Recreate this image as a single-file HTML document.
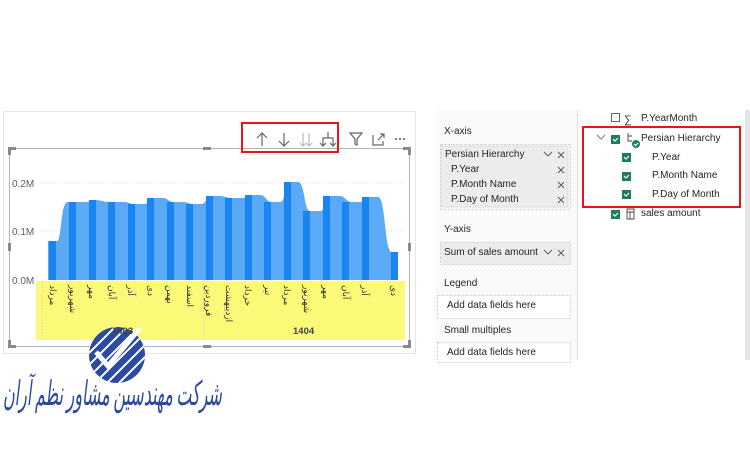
<!DOCTYPE html>
<html><head><meta charset="utf-8"><style>
body{margin:0;width:750px;height:450px;background:#fff;position:relative;overflow:hidden;font-family:"Liberation Sans","Noto Sans CJK SC",sans-serif}
.a{position:absolute;white-space:nowrap}
.t{font-size:10px;color:#252423}
</style></head><body>
<svg width="750" height="450" style="position:absolute;left:0;top:0">
<defs>
<clipPath id="cc"><circle cx="117" cy="355" r="28"/></clipPath>
</defs>
<rect x="3.5" y="111.5" width="412" height="242" fill="#fff" stroke="#e6e6e6"/>
<rect x="9.5" y="148.5" width="400" height="198" fill="none" stroke="#b3b3b3"/>
<g fill="#8a8a8a">
<rect x="8" y="147" width="8" height="3"/><rect x="8" y="147" width="3" height="8"/>
<rect x="403" y="147" width="8" height="3"/><rect x="408" y="147" width="3" height="8"/>
<rect x="8" y="345" width="8" height="3"/><rect x="8" y="340" width="3" height="8"/>
<rect x="403" y="345" width="8" height="3"/><rect x="408" y="340" width="3" height="8"/>
<rect x="203" y="147" width="8" height="3"/><rect x="203" y="345" width="8" height="3"/>
<rect x="8" y="243" width="3" height="8"/><rect x="408" y="243" width="3" height="8"/>
</g>
<rect x="242" y="123" width="96" height="29" fill="none" stroke="#e8141b" stroke-width="2"/>
<g stroke="#666" stroke-width="1.2" fill="none">
<path d="M262 146V133M257 138l5-5 5 5"/>
<path d="M284 133v13M279 141l5 5 5-5"/>
<path d="M303 133v13M309 133v13M300 143l3 3 3-3M306 143l3 3 3-3" stroke="#bbb"/>
<path d="M328 132v6M323 146v-8h10v8M320 143l3 3 3-3M330 143l3 3 3-3"/>
<path d="M350 133h12l-5 6v6l-2-1v-5z"/>
<path d="M373 135v10h10v-4M378 140l6-6M380 134h4v4"/>
</g>
<g fill="#555"><circle cx="396" cy="139" r="1"/><circle cx="400" cy="139" r="1"/><circle cx="404" cy="139" r="1"/></g>
<g stroke="#ddd" stroke-dasharray="1 2"><path d="M40 183H405M40 231H405"/></g>
<path d="M48 280V241H57C62 241 60 202 68 202H86C90 202 92 200 96 200C100 200 104 202 110 202H124C128 202 130 204 134 204H144C150 204 150 198 156 198H163C168 198 168 202 174 202H182C188 202 188 204 194 204H202C206 204 206 196 212 196H220C225 196 226 198 232 198H242C247 198 247 195 252 195H260C266 195 266 202 272 202H280C286 202 284 182 290 182H298C305 182 304 211 310 211H320C326 211 325 196 330 196H340C345 196 346 202 352 202H360C365 202 365 197 370 197H378C386 197 384 252 392 252H398V280Z" fill="#5aaaf8"/>
<g fill="#1a84f0">
<rect x="49" y="241" width="7" height="39"/><rect x="69" y="202" width="7" height="78"/><rect x="89" y="200" width="7" height="80"/><rect x="108" y="202" width="7" height="78"/><rect x="128" y="204" width="7" height="76"/><rect x="147" y="198" width="7" height="82"/><rect x="167" y="202" width="7" height="78"/><rect x="186" y="204" width="7" height="76"/><rect x="206" y="196" width="7" height="84"/><rect x="225" y="198" width="7" height="82"/><rect x="245" y="195" width="7" height="85"/><rect x="264" y="202" width="7" height="78"/><rect x="284" y="182" width="7" height="98"/><rect x="303" y="211" width="7" height="69"/><rect x="323" y="196" width="7" height="84"/><rect x="342" y="202" width="7" height="78"/><rect x="362" y="197" width="7" height="83"/><rect x="391" y="252" width="7" height="28"/>
</g>
<rect x="36" y="281" width="369" height="59" fill="#fafa78"/>
<path d="M203.5 281V340M42.5 281V340" stroke="#ccc" stroke-dasharray="1 2"/>
<g font-family="Liberation Sans" font-size="10" fill="#605e5c"><text x="12" y="187">0.2M</text><text x="12" y="235">0.1M</text><text x="12" y="284">0.0M</text></g>
<g font-family="Noto Sans CJK SC,sans-serif" font-size="9" fill="#333">
<text transform="translate(50,285) rotate(90)">مرداد</text>
<text transform="translate(70,285) rotate(90)">شهریور</text>
<text transform="translate(89,285) rotate(90)">مهر</text>
<text transform="translate(109,285) rotate(90)">آبان</text>
<text transform="translate(128,285) rotate(90)">آذر</text>
<text transform="translate(148,285) rotate(90)">دی</text>
<text transform="translate(167,285) rotate(90)">بهمن</text>
<text transform="translate(187,285) rotate(90)">اسفند</text>
<text transform="translate(206,285) rotate(90)">فروردین</text>
<text transform="translate(226,285) rotate(90)">اردیبهشت</text>
<text transform="translate(245,285) rotate(90)">خرداد</text>
<text transform="translate(265,285) rotate(90)">تیر</text>
<text transform="translate(284,285) rotate(90)">مرداد</text>
<text transform="translate(304,285) rotate(90)">شهریور</text>
<text transform="translate(323,285) rotate(90)">مهر</text>
<text transform="translate(343,285) rotate(90)">آبان</text>
<text transform="translate(362,285) rotate(90)">آذر</text>
<text transform="translate(391,285) rotate(90)">دی</text>
</g>
<circle cx="117" cy="355" r="28" fill="#2b4aa0"/>
<g clip-path="url(#cc)" stroke="#fff" stroke-width="2">
<path d="M70 360l60-60M76 366l60-60M82 372l60-60M88 378l60-60M94 384l60-60M100 390l60-60M106 396l60-60M112 402l60-60M118 408l60-60M124 414l60-60"/>
</g>
<path d="M96 352l12 14 32-38" stroke="#fff" stroke-width="5" fill="none"/>
<g font-family="Liberation Sans" font-size="9.5" font-weight="bold" fill="#444"><text x="112" y="334">1403</text><text x="293" y="334">1404</text></g>
<rect x="435" y="110" width="142" height="250" fill="#fafafa"/>
<rect x="577" y="110" width="168" height="250" fill="#fff"/>
<line x1="577.5" y1="110" x2="577.5" y2="360" stroke="#e1e1e1"/>
<rect x="745" y="110" width="5" height="250" fill="#e6e6e6"/>
<rect x="440.5" y="144.5" width="130" height="65" fill="none" stroke="#ccc" stroke-dasharray="2 2"/>
<rect x="441" y="146" width="127" height="61" fill="#ececec" stroke="#ddd"/>
<rect x="440.5" y="242.5" width="130" height="22" fill="#ececec" stroke="#ccc" stroke-dasharray="2 2"/>
<rect x="437.5" y="295.5" width="133" height="23" fill="#fff" stroke="#ccc" stroke-dasharray="2 2"/>
<rect x="437.5" y="342.5" width="133" height="20" fill="#fff" stroke="#ccc" stroke-dasharray="2 2"/>
<g stroke="#555" fill="none" stroke-width="0.9">
<path d="M544 152l4 4 4-4M558 152l6 6M564 152l-6 6M558 167l6 6M564 167l-6 6M558 182l6 6M564 182l-6 6M558 197l6 6M564 197l-6 6M544 250l4 4 4-4M558 250l6 6M564 250l-6 6"/>
<path d="M597 135l4 4 4-4" stroke="#777"/>
</g>
<rect x="583" y="127" width="157" height="80" fill="none" stroke="#e8141b" stroke-width="2"/>
<rect x="611.5" y="113.5" width="8" height="8" fill="#fff" stroke="#666"/>
<g fill="#1e7d5e">
<rect x="611" y="135" width="9" height="9"/><rect x="622" y="153" width="9" height="9"/><rect x="622" y="172" width="9" height="9"/><rect x="622" y="190" width="9" height="9"/><rect x="611" y="210" width="9" height="9"/>
<circle cx="636" cy="144" r="4"/>
</g>
<g stroke="#fff" stroke-width="1.2" fill="none"><path d="M613 139l2 2 3-3M624 157l2 2 3-3M624 176l2 2 3-3M624 194l2 2 3-3M613 214l2 2 3-3M634 144l1.5 1.5 2.5-2.5"/></g>
<g stroke="#444" fill="none" stroke-width="0.9"><path d="M628 133v8h4M628 136h4M627 209h7v10h-7zM627 212h7M630 212v7"/></g>
<text x="624" y="123" font-size="11" fill="#333">∑</text>
</svg>
<div class="a t" style="left:641px;top:113px">P.YearMonth</div>
<div class="a t" style="left:641px;top:133px">Persian Hierarchy</div>
<div class="a t" style="left:652px;top:152px">P.Year</div>
<div class="a t" style="left:652px;top:170px">P.Month Name</div>
<div class="a t" style="left:652px;top:189px">P.Day of Month</div>
<div class="a t" style="left:641px;top:208px">sales amount</div>
<div class="a t" style="left:444px;top:126px">X-axis</div>
<div class="a t" style="left:445px;top:149px">Persian Hierarchy</div>
<div class="a t" style="left:451px;top:164px">P.Year</div>
<div class="a t" style="left:451px;top:179px">P.Month Name</div>
<div class="a t" style="left:451px;top:194px">P.Day of Month</div>
<div class="a t" style="left:444px;top:224px">Y-axis</div>
<div class="a t" style="left:444px;top:247px">Sum of sales amount</div>
<div class="a t" style="left:444px;top:278px">Legend</div>
<div class="a t" style="left:447px;top:300px">Add data fields here</div>
<div class="a t" style="left:444px;top:325px">Small multiples</div>
<div class="a t" style="left:447px;top:347px">Add data fields here</div>
<div class="a" style="right:528px;top:366px;direction:rtl;font-family:'Noto Sans CJK SC',sans-serif;font-size:34px;font-style:italic;color:#2b4aa0;transform:scaleX(0.47);transform-origin:right top">شرکت مهندسین مشاور نظم آران</div>
</body></html>
